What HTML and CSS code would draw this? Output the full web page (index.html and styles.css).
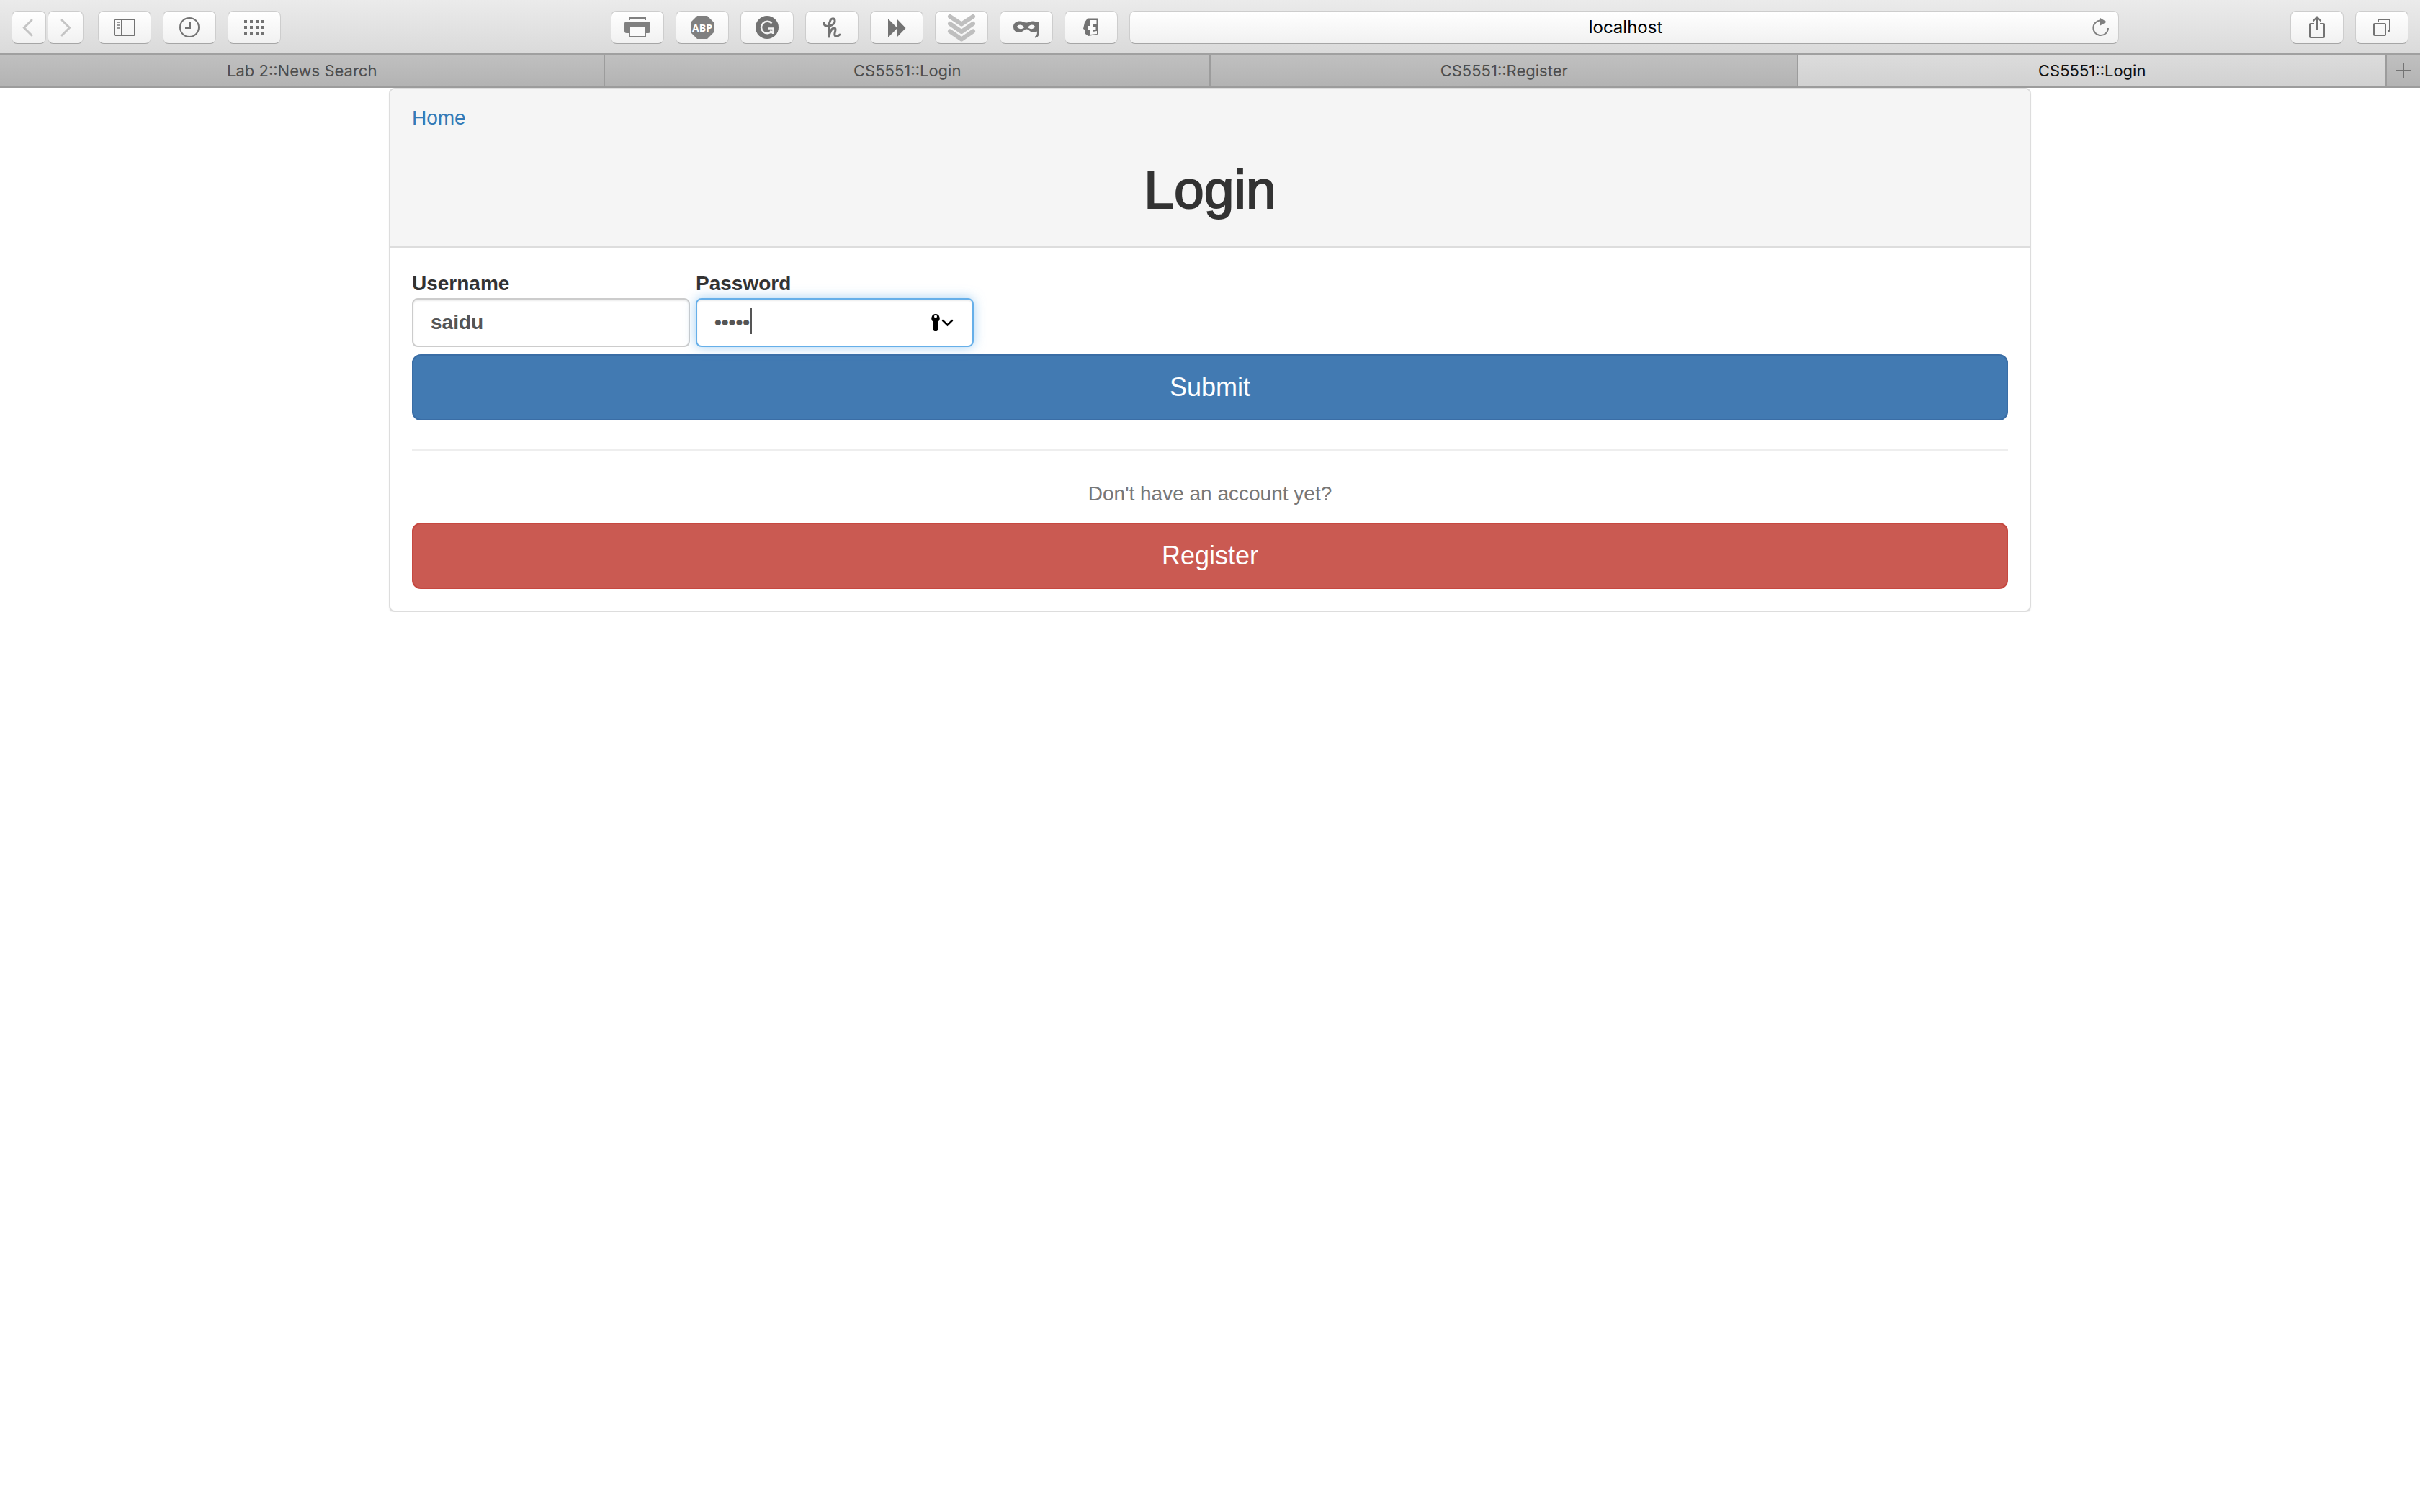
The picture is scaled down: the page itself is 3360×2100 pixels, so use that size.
FILE: index.html
```html
<!DOCTYPE html>
<html lang="en">
<head>
<meta charset="utf-8">
<title>CS5551::Login</title>
<link rel="stylesheet" href="styles.css">
</head>
<body>
<header class="browser">
  <div class="toolbar">
    <div class="tools">
      <div class="history">
        <button class="tool back" aria-label="Back"><svg width="48" height="44" viewBox="0 0 48 44"><path class="faint" d="M28 12 17.500 22.500 28 33"/></svg></button>
        <button class="tool forward" aria-label="Forward"><svg width="50" height="44" viewBox="0 0 50 44"><path class="faint" d="M20 12 30.500 22.500 20 33"/></svg></button>
      </div>
      <button class="tool" aria-label="Sidebar"><svg width="74" height="44" viewBox="0 0 74 44"><rect class="line" x="23" y="11" width="28" height="22" rx="1"/><path class="line" d="M33 11v22"/><path class="line thin" d="M26 15h4M26 19h4M26 23h4"/></svg></button>
      <button class="tool" aria-label="History"><svg width="74" height="44" viewBox="0 0 74 44"><circle class="line" cx="37" cy="22" r="13"/><path class="line" d="M38 14v9h-7"/></svg></button>
      <button class="tool" aria-label="Top sites"><svg width="74" height="44" viewBox="0 0 74 44"><path class="solid" d="M23 12h4v4h-4zM31 12h4v4h-4zM39 12h4v4h-4zM47 12h4v4h-4zM23 20h4v4h-4zM31 20h4v4h-4zM39 20h4v4h-4zM47 20h4v4h-4zM23 28h4v4h-4zM31 28h4v4h-4zM39 28h4v4h-4zM47 28h4v4h-4z"/></svg></button>
    </div>
    <div class="tools center">
      <button class="tool" aria-label="Print"><svg width="74" height="44" viewBox="0 0 74 44"><path class="line soft" d="M26 12V9h22v3"/><path class="solid soft" d="M22 14h30q3 0 3 3v10q0 3-3 3h-3v6H25v-6h-3q-3 0-3-3V17q0-3 3-3z"/><path fill="#fafafa" d="M27 22h20v12H27z"/></svg></button>
      <button class="tool" aria-label="Ad blocker"><svg width="74" height="44" viewBox="0 0 74 44"><path class="solid soft" d="M30 6h14l9 9v14l-9 9H30l-9-9V15z"/><text class="abp" x="37" y="28" text-anchor="middle">ABP</text></svg></button>
      <button class="tool" aria-label="Grammar check"><svg width="74" height="44" viewBox="0 0 74 44"><circle class="solid" cx="37" cy="22" r="16"/><path fill="none" stroke="#f3f3f3" stroke-width="2.500" d="M43.500 16.500A8.300 8.300 0 1 0 44 27"/><path fill="none" stroke="#f3f3f3" stroke-width="2.500" d="M38 23.500h7.500V31M45 30l-4-3"/></svg></button>
      <button class="tool" aria-label="Coupons"><svg width="74" height="44" viewBox="0 0 74 44"><circle class="solid" cx="26" cy="16" r="2"/><path class="line hook" d="M26 16c0 4 4 5 8 4 5-1 8-5 7-8-1-3-4-3-6 0-1.500 3-2 6-2 9v14c1-7 4-12 7-12s2 3 1 7c-1 5 3 6 7 2"/></svg></button>
      <button class="tool" aria-label="Skip ahead"><svg width="74" height="44" viewBox="0 0 74 44"><path class="solid" d="M25 10l12 12V10l12.500 13L37 36V24L25 36z"/></svg></button>
      <button class="tool" aria-label="Save page"><svg width="74" height="44" viewBox="0 0 74 44"><path class="stack" d="M21 7l16 10.500L53 7M21 17l16 11 16-11M21 27.500l16 11 16-11"/></svg></button>
      <button class="tool" aria-label="Privacy mask"><svg width="74" height="44" viewBox="0 0 74 44"><path class="solid" fill-rule="evenodd" d="M28 13.500c4 0 6 2 9 2s5-2 9-2c3 0 4 1 6 1 2.500-.5 3.300 1 3 4V28c0 5-2 8-6 8.500v-2c2-.5 3-2 3-7-5 3-9 1-12-2-1.500-1.500-4-1.500-5.500 0-3 3-7 3.500-10 3-4-.7-5.500-4-5.500-7.500 0-5 4-7.500 9-7.500zM24 21c2 4 8 4 10 1-2-4-8-5-10-1zm15.500 1c2 3 8 3 9.500-1-2-4-8-3-9.500 1z"/></svg></button>
      <button class="tool" aria-label="Extension"><svg width="74" height="44" viewBox="0 0 74 44"><path class="solid" d="M32 9.500h14l1 9-1 2 1 11-14 2.500-4-3v-5l-3-2 2-9z"/><path fill="#fafafa" d="M35 12h9.500v5H39v4h4.500v4.500H39V28l6-1v4l-9.500 1v-7H33v-5h2z"/></svg></button>
      <div class="address">
        <input class="address-input" type="text" value="localhost" aria-label="Address">
        <button class="reload" aria-label="Reload"><svg width="50" height="44" viewBox="0 0 50 44"><path class="line soft" d="M26 12.500A10.300 10.300 0 1 0 36 23"/><path class="solid soft" d="M25 9l9 5.500-9 5z"/></svg></button>
      </div>
    </div>
    <div class="tools right">
      <button class="tool" aria-label="Share"><svg width="74" height="44" viewBox="0 0 74 44"><path class="line" d="M33 17h-5q-1 0-1 1v17q0 1 1 1h18q1 0 1-1V18q0-1-1-1h-5M37 26V8M31.500 13.500L37 7.500l5.500 6"/></svg></button>
      <button class="tool" aria-label="Show all tabs"><svg width="74" height="44" viewBox="0 0 74 44"><rect class="line" x="26" y="17" width="16" height="16" rx="1"/><path class="line" d="M32 14v-2q0-1 1-1h14q1 0 1 1v14q0 1-1 1h-2"/></svg></button>
    </div>
  </div>
  <nav class="tabs">
    <a class="tab" href="#">Lab 2::News Search</a>
    <a class="tab" href="#">CS5551::Login</a>
    <a class="tab narrow" href="#">CS5551::Register</a>
    <a class="tab narrow active" href="#">CS5551::Login</a>
    <button class="new-tab" aria-label="New tab"><svg width="22" height="22" viewBox="0 0 22 22"><path class="line" d="M11 0v22M0 11h22"/></svg></button>
  </nav>
</header>
<main class="panel">
  <div class="panel-heading">
    <a class="home" href="#">Home</a>
    <h1 class="title">Login</h1>
  </div>
  <div class="panel-body">
    <form>
      <div class="fields">
        <div class="field">
          <label for="username">Username</label>
          <input class="control" id="username" type="text" value="saidu">
        </div>
        <div class="field">
          <label for="password">Password</label>
          <div class="password-box">
            <input class="control focused" id="password" type="password" value="saidu">
            <span class="caret"></span>
            <svg class="key" width="32" height="26" viewBox="0 0 32 26"><path fill="#000" fill-rule="evenodd" d="M7 1a6 6 0 0 1 3 11v11q0 2-3 2t-3-2V12A6 6 0 0 1 7 1zm0 1.500a2 2 0 1 0 0 4 2 2 0 0 0 0-4z"/><path fill="none" stroke="#000" stroke-width="2.500" stroke-linecap="round" d="M17 10l6.500 6.500L30 10"/></svg>
          </div>
        </div>
      </div>
      <button class="btn primary" type="button">Submit</button>
    </form>
    <hr class="divider">
    <p class="hint">Don't have an account yet?</p>
    <button class="btn danger" type="button">Register</button>
  </div>
</main>
</body>
</html>
```
FILE: styles.css
```css
* { box-sizing: border-box; }

body {
  margin: 0;
  background: #fff;
  color: #333;
  font-family: "Liberation Sans", Arial, sans-serif;
  font-size: 28px;
  line-height: 40px;
}

button, input { font: inherit; margin: 0; }
svg { display: block; }

/* Browser chrome */
.browser {
  font-family: Inter, Roboto, sans-serif;
  font-size: 22px;
  font-weight: 400;
}

.toolbar {
  display: grid;
  grid-template-columns: 816px 1fr 386px;
  gap: 16px;
  height: 74px;
  padding: 15px 16px 0;
  background: linear-gradient(#ebebeb, #dadada);
}

.tools { display: flex; gap: 16px; align-items: flex-start; }
.tools.right { justify-content: flex-end; }
.history { display: flex; gap: 2px; margin-right: 4px; }

.tool, .address {
  height: 46px;
  padding: 0;
  border: 1px solid #cdcdcd;
  border-bottom-color: #a6a6a6;
  border-radius: 8px;
  background: linear-gradient(#fff, #f1f1f1);
}

.tool {
  display: flex;
  align-items: center;
  justify-content: center;
  flex: none;
  width: 74px;
  overflow: hidden;
}

.tool svg { flex: none; }
.back { width: 48px; }
.forward { width: 50px; }

.line { fill: none; stroke: #737373; stroke-width: 2; }
.solid { fill: #737373; }
.line.soft { stroke: #808080; }
.solid.soft { fill: #808080; }
.line.thin { stroke: #999; }
.line.hook { stroke-width: 3; stroke-linecap: round; stroke-linejoin: round; }
.faint { fill: none; stroke: #c4c4c4; stroke-width: 3; stroke-linecap: round; }
.stack { fill: none; stroke: #bfbfbf; stroke-width: 6; stroke-linecap: round; stroke-linejoin: round; }
.abp { fill: #fff; font: bold 14px "Open Sans", sans-serif; }

.address { display: flex; flex: 1; padding-left: 54px; }

.address-input {
  flex: 1;
  min-width: 0;
  padding: 0;
  border: 0;
  outline: 0;
  background: none;
  color: #000;
  font-size: 24px;
  text-align: center;
}

.reload { width: 50px; padding: 0; border: 0; background: none; }

.tabs {
  display: flex;
  height: 48px;
  border-top: 2px solid #a0a0a0;
  border-bottom: 2px solid #9c9c9c;
  background: linear-gradient(#c0c0c0, #b3b3b3);
}

.tab {
  flex: 35 1 0;
  border-right: 2px solid #9c9c9c;
  color: #4d4d4d;
  line-height: 44px;
  text-align: center;
  text-decoration: none;
}

.tab.narrow { flex-grow: 34; }
.tab.active { background: linear-gradient(#dcdcdc, #d1d1d1); color: #111; }

.new-tab {
  display: flex;
  align-items: center;
  justify-content: center;
  width: 46px;
  padding: 0;
  border: 0;
  background: none;
}

/* Login panel */
.panel {
  max-width: 2280px;
  margin: 0 auto;
  border: 2px solid #ddd;
  border-radius: 8px;
  background: #fff;
  box-shadow: 0 2px 2px rgba(0, 0, 0, 0.05);
}

.panel-heading {
  padding: 20px 30px;
  border-bottom: 2px solid #ddd;
  border-radius: 6px 6px 0 0;
  background: #f5f5f5;
}

.home { display: block; width: max-content; color: #337ab7; text-decoration: none; }

.title {
  margin: 40px 0 20px;
  font-size: 75px;
  font-weight: 400;
  line-height: 78px;
  text-align: center;
  -webkit-text-stroke: 2px #333;
}

.panel-body { padding: 30px; }
.fields { display: flex; gap: 8px; margin-bottom: 10px; }
.field { width: 386px; font-weight: 700; }
.field label { display: block; }

.control {
  display: block;
  width: 100%;
  height: 68px;
  padding: 12px 24px;
  border: 2px solid #ccc;
  border-radius: 8px;
  outline: 0;
  background: #fff;
  box-shadow: inset 0 2px 2px rgba(0, 0, 0, 0.075);
  color: #555;
}

.control.focused {
  border-color: #66afe9;
  box-shadow: inset 0 2px 2px rgba(0, 0, 0, 0.075), 0 0 16px rgba(102, 175, 233, 0.6);
}

.password-box { position: relative; }
.caret { position: absolute; left: 76px; top: 14px; width: 2px; height: 36px; background: #555; }
.key { position: absolute; right: 28px; top: 21px; }

.btn {
  display: block;
  width: 100%;
  height: 92px;
  padding: 0;
  border: 2px solid;
  border-radius: 12px;
  color: #fff;
  font-size: 36px;
  line-height: 48px;
}

.primary { border-color: #3a6da5; background: #427ab2; }
.danger { border-color: #c64840; background: #ca5a52; }

.divider { margin: 40px 0; border: 0; border-top: 2px solid #eee; }
.hint { margin: 0 0 20px; color: #777; text-align: center; }
```
